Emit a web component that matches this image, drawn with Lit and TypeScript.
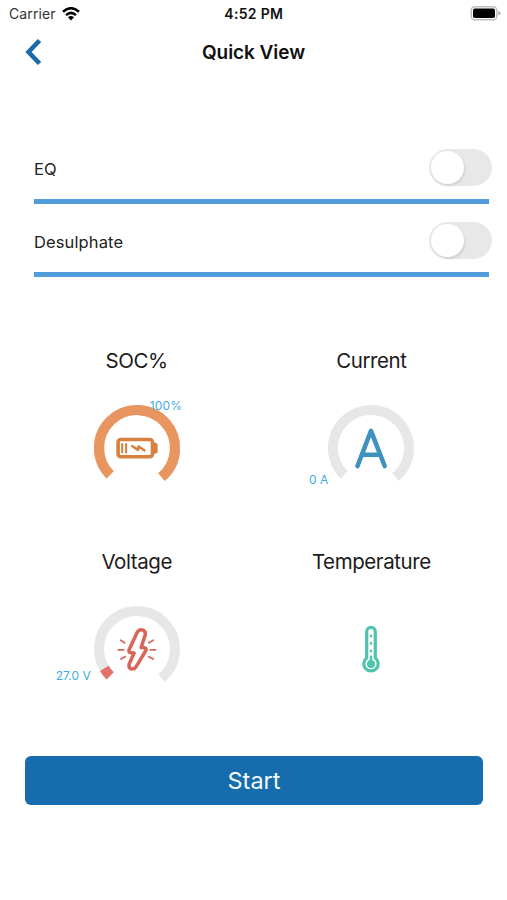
import { LitElement, html, css, svg } from "lit";
import { customElement, property } from "lit/decorators.js";

const point = (deg: number, r = 38) => {
  const a = (deg * Math.PI) / 180;
  return `${(r * Math.cos(a)).toFixed(2)} ${(r * Math.sin(a)).toFixed(2)}`;
};
const arc = (from: number, to: number) =>
  `M${point(from)}A38 38 0 ${to - from > 180 ? 1 : 0} 1 ${point(to)}`;

const START = 135;
const END = 410;

const icons = {
  battery: svg`<g fill="none" stroke="#d8803f">
    <rect x="-18.900" y="-8.500" width="34.400" height="17.200" rx="2.600" stroke-width="3.600"/>
    <path d="M17 -5.600h1.400q2.200.6 2.200 2.400v6.600q0 1.800-2.200 2.400H17z" fill="#d8803f" stroke="none"/>
    <path d="M-14.800-4.800V5.200M-10.900-4.800V5.200" stroke-width="2.100"/>
    <path d="M-5.600-2.500L1 1.900 1.700-1.500 8.200 2.900" stroke-width="2.500" stroke-linejoin="round"/>
  </g>`,
  amp: svg`<path d="M-13.500 18L0-17.200 13.700 18M-9 6.700H9" fill="none" stroke="#3f92bf" stroke-width="4.600" stroke-linecap="round" stroke-linejoin="round"/>`,
  bolt: svg`<g fill="none" stroke="#d9655a" stroke-linecap="round" stroke-linejoin="round">
    <path stroke-width="3.500" d="M0-16.300L-7.900.8Q-8.600 3.500-6.300 3.700L-2.900 4-7.900 15.300Q-8.700 18.700-5.800 19.900-3.100 20.700-1.300 18.300L8.900 1.500Q9.800-.8 7.600-1.200L4.100-1.400 8.200-14Q9-17.600 6.100-18.900 2.200-20.200 0-16.300Z"/>
    <path stroke-width="1.800" d="M-16.400-8.700L-12.300-6.300M-18.600.8H-13.300M-16 10L-11.800 7.700M16.200-8.700L11.900-6.300M18.600.8H13.300M16.200 10L11.800 7.700"/>
  </g>`,
  thermometer: svg`<g fill="none" stroke="#4fc3ae">
    <path stroke-width="3.200" d="M-4.300 9V-17.400a4.300 4.300 0 0 1 8.600 0V9A7.200 7.200 0 1 1-4.300 9Z"/>
    <circle cy="14.900" r="4" fill="#4fc3ae" stroke="none"/>
    <path stroke-width="2.400" d="M0 14V6.400M0-14.200v2.400M0-6.900v2.400M0 .8v2.400"/>
  </g>`,
};

@customElement("status-bar")
class StatusBar extends LitElement {
  static styles = css`
    :host { display: grid; grid-template-columns: 1fr auto 1fr; align-items: center; height: 27px; padding: 0 6px 0 9px; font-size: 14px; }
    .left { display: flex; align-items: center; gap: 6px; color: #333; }
    .carrier { letter-spacing: 0.1px; }
    .time { font-weight: 600; font-size: 14px; letter-spacing: 0.300px; color: #111; margin-right: 2.500px; }
    .battery { justify-self: end; display: block; }
    .wifi { display: block; }
  `;
  render() {
    return html`
      <div class="left">
        <span class="carrier">Carrier</span>
        <svg class="wifi" width="18" height="14" viewBox="0 0 18 14">
          <path d="M1 4.800Q9-2.400 17 4.800M4 8.100Q9 3.700 14 8.100" fill="none" stroke="#000" stroke-width="2.500"/>
          <path d="M6 10.300Q9 7.900 12 10.300L9 13.600Z"/>
        </svg>
      </div>
      <span class="time">4:52 PM</span>
      <svg class="battery" width="31" height="16" viewBox="0 0 31 16">
        <rect x="1.200" y="0.800" width="25.600" height="13" rx="3.600" fill="#fff" stroke="#bdbdbd" stroke-width="1.500"/>
        <rect x="3" y="2.600" width="22" height="9.400" rx="1.800"/>
        <path d="M28.300 5.100q2.200.8 2.200 2.200t-2.200 2.200z" fill="#aaa"/>
      </svg>
    `;
  }
}

@customElement("toggle-row")
class ToggleRow extends LitElement {
  @property() label = "";
  static styles = css`
    :host { display: flex; align-items: flex-end; justify-content: space-between; box-sizing: border-box; height: 73.300px; padding-bottom: 13px; border-bottom: 5px solid #519cda; }
    .label { font-size: 16.500px; line-height: 20px; color: #222; margin-bottom: 7px; letter-spacing: 0.120px; }
    .track { width: 62.500px; height: 37.500px; border-radius: 19px; background: #e8e8e8; margin-right: -2.500px; box-sizing: border-box; padding: 2.200px; }
    .knob { width: 33px; height: 33px; border-radius: 50%; background: #fff; box-shadow: 1px 2px 3px rgba(0, 0, 0, 0.1); }
  `;
  render() {
    return html`<span class="label">${this.label}</span>
      <div class="track"><div class="knob"></div></div>`;
  }
}

@customElement("gauge-card")
class GaugeCard extends LitElement {
  @property() label = "";
  @property() icon: keyof typeof icons = "amp";
  @property() value = "";
  @property() place = "low";
  @property() color = "";
  @property({ type: Number }) level = 0;
  @property({ type: Boolean }) bare = false;
  static styles = css`
    :host { display: flex; flex-direction: column; align-items: center; gap: 23px; }
    .title { font-size: 20.500px; line-height: 28px; color: #1b1b1b; letter-spacing: -0.420px; }
    .dial { position: relative; width: 100px; height: 100px; }
    .ring { display: block; }
    .value { position: absolute; font-size: 12px; line-height: 14px; color: #3facdf; white-space: nowrap; }
    .high { left: 63px; top: 1px; letter-spacing: 0.200px; }
    .low { right: 93px; top: 74.500px; }
    .mid { right: 96px; top: 70px; }
  `;
  render() {
    return html`
      <div class="title">${this.label}</div>
      <div class="dial">
        <svg class="ring" width="100" height="100" viewBox="-50 -50 100 100">
          ${this.bare
            ? null
            : svg`<path d=${arc(START, END)} fill="none" stroke="#e7e7e7" stroke-width="10"/>`}
          ${this.level > 0
            ? svg`<path d=${arc(START, START + (END - START) * this.level)} fill="none" stroke=${this.color} stroke-width="10.200"/>`
            : null}
          ${icons[this.icon]}
        </svg>
        ${this.value ? html`<span class="value ${this.place}">${this.value}</span>` : null}
      </div>
    `;
  }
}

@customElement("app-root")
class AppRoot extends LitElement {
  static styles = css`
    :host { display: block; height: 900px; box-sizing: border-box; overflow: hidden; background: #fff; font-family: Inter, "Liberation Sans", sans-serif; }
    .nav { display: grid; grid-template-columns: 1fr auto 1fr; align-items: center; height: 50px; padding: 0 24px; }
    .back { display: block; }
    .heading { margin: 0; font-size: 19px; font-weight: 600; color: #111; letter-spacing: -0.050px; }
    .toggles { margin: 53.800px 18px 0 34px; }
    .gauges { display: grid; grid-template-columns: 1fr 1fr; row-gap: 49.500px; margin: 69.800px 18.400px 0 19.400px; }
    .start { display: block; width: 457.500px; height: 49px; margin: 57.500px 0 0 25.300px; padding: 0; border: 0; border-radius: 6px; background: #176cae; color: #f2faff; font-family: inherit; font-size: 23.500px; }
  `;
  render() {
    return html`
      <status-bar></status-bar>
      <header class="nav">
        <svg class="back" width="20" height="28" viewBox="0 0 20 28">
          <path d="M15.500 2.500L4.500 14 15.500 25.500" fill="none" stroke="#1b6bab" stroke-width="4.600"/>
        </svg>
        <h1 class="heading">Quick View</h1>
      </header>
      <section class="toggles">
        <toggle-row label="EQ"></toggle-row>
        <toggle-row label="Desulphate"></toggle-row>
      </section>
      <section class="gauges">
        <gauge-card label="SOC%" icon="battery" value="100%" place="high" color="#e99560" level="1"></gauge-card>
        <gauge-card label="Current" icon="amp" value="0 A" place="low"></gauge-card>
        <gauge-card label="Voltage" icon="bolt" value="27.0 V" place="mid" color="#e2736c" level="0.052"></gauge-card>
        <gauge-card label="Temperature" icon="thermometer" bare></gauge-card>
      </section>
      <button class="start">Start</button>
    `;
  }
}
